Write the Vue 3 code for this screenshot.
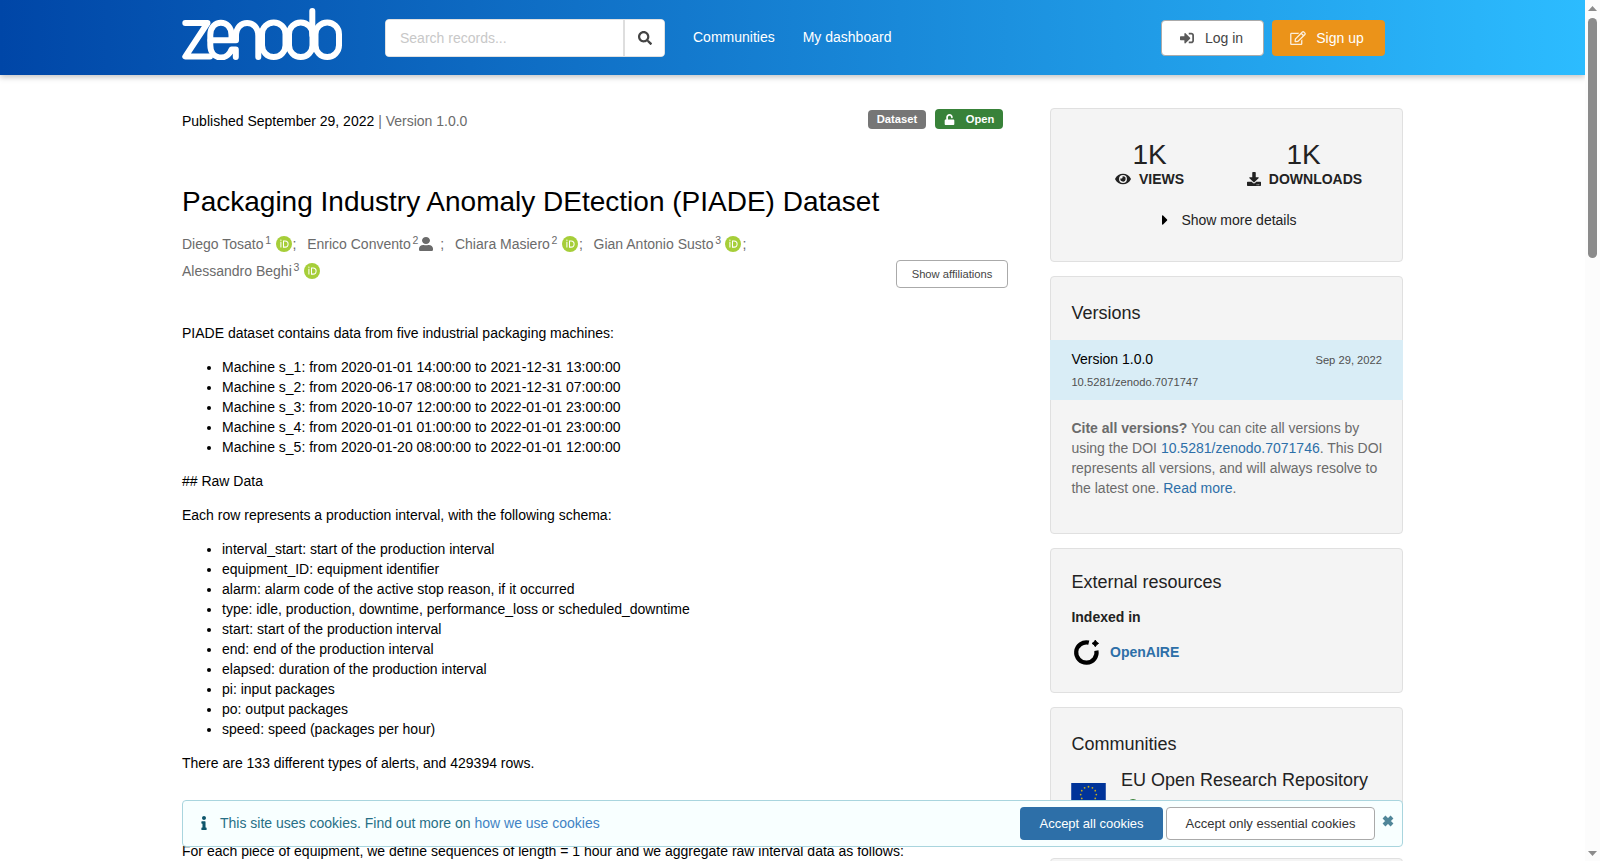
<script setup>
const icons = {
	search: {
		box: '0 0 512 512',
		path: 'M505 442.7L405.3 343c-4.5-4.5-10.6-7-17-7H372c27.6-35.3 44-79.7 44-128C416 93.1 322.9 0 208 0S0 93.1 0 208s93.1 208 208 208c48.3 0 92.7-16.4 128-44v16.3c0 6.4 2.5 12.5 7 17l99.7 99.7c9.4 9.4 24.6 9.4 33.9 0l28.3-28.3c9.4-9.4 9.4-24.6.1-34zM208 336c-70.7 0-128-57.2-128-128 0-70.7 57.2-128 128-128 70.7 0 128 57.2 128 128 0 70.7-57.2 128-128 128z',
	},
	signIn: {
		box: '0 0 512 512',
		path: 'M416 448h-84c-6.6 0-12-5.4-12-12v-40c0-6.6 5.4-12 12-12h84c17.7 0 32-14.3 32-32V160c0-17.7-14.3-32-32-32h-84c-6.6 0-12-5.4-12-12V76c0-6.6 5.4-12 12-12h84c53 0 96 43 96 96v192c0 53-43 96-96 96zm-47-201L201 79c-15-15-41-4.5-41 17v96H24c-13.3 0-24 10.7-24 24v96c0 13.3 10.7 24 24 24h136v96c0 21.5 26 32 41 17l168-168c9.3-9.4 9.3-24.6 0-34z',
	},
	edit: {
		box: '0 0 576 512',
		path: 'M402.3 344.9l32-32c5-5 13.7-1.5 13.7 5.7V464c0 26.5-21.5 48-48 48H48c-26.5 0-48-21.5-48-48V112c0-26.5 21.5-48 48-48h273.5c7.1 0 10.7 8.6 5.7 13.7l-32 32c-1.5 1.5-3.5 2.3-5.7 2.3H48v352h352V350.5c0-2.1.8-4.1 2.3-5.6zm156.6-201.8L296.3 405.7l-90.4 10c-26.2 2.9-48.5-19.2-45.6-45.6l10-90.4L432.9 17.1c22.9-22.9 59.9-22.9 82.7 0l43.2 43.2c22.9 22.9 22.9 60 .1 82.8zM460.1 174L402 115.9 216.2 301.8l-7.3 65.3 65.3-7.3L460.1 174zm64.8-79.7l-43.2-43.2c-4.1-4.1-10.8-4.1-14.8 0L436 82l58.1 58.1 30.9-30.9c4-4.2 4-10.8-.1-14.9z',
	},
	unlock: {
		box: '0 0 448 512',
		path: 'M400 256H152V152.9c0-39.6 31.7-72.5 71.3-72.9 40-.4 72.7 32.1 72.7 72v16c0 13.3 10.7 24 24 24h32c13.3 0 24-10.7 24-24v-16C376 68 307.5-.3 223.5 0 139.5.3 72 69.5 72 153.5V256H48c-26.5 0-48 21.5-48 48v160c0 26.5 21.5 48 48 48h352c26.5 0 48-21.5 48-48V304c0-26.5-21.5-48-48-48z',
	},
	user: {
		box: '0 0 448 512',
		path: 'M224 256c70.7 0 128-57.3 128-128S294.7 0 224 0 96 57.3 96 128s57.3 128 128 128zm89.6 32h-16.7c-22.2 10.2-46.9 16-72.9 16s-50.6-5.8-72.9-16h-16.7C60.2 288 0 348.2 0 422.4V464c0 26.5 21.5 48 48 48h352c26.5 0 48-21.5 48-48v-41.6c0-74.2-60.2-134.4-134.4-134.4z',
	},
	eye: {
		box: '0 0 576 512',
		path: 'M572.52 241.4C518.29 135.59 410.93 64 288 64S57.68 135.64 3.48 241.41a32.35 32.35 0 0 0 0 29.19C57.71 376.41 165.07 448 288 448s230.32-71.64 284.52-177.41a32.35 32.35 0 0 0 0-29.19zM288 400a144 144 0 1 1 144-144 143.93 143.93 0 0 1-144 144zm0-240a95.31 95.31 0 0 0-25.31 3.79 47.85 47.85 0 0 1-66.9 66.9A95.78 95.78 0 1 0 288 160z',
	},
	download: {
		box: '0 0 512 512',
		path: 'M216 0h80c13.3 0 24 10.7 24 24v168h87.7c17.8 0 26.7 21.5 14.1 34.1L269.7 378.3c-7.5 7.5-19.8 7.5-27.3 0L90.1 226.1c-12.6-12.6-3.7-34.1 14.1-34.1H192V24c0-13.3 10.7-24 24-24zm296 376v112c0 13.3-10.7 24-24 24H24c-13.3 0-24-10.7-24-24V376c0-13.3 10.7-24 24-24h146.7l49 49c20.1 20.1 52.5 20.1 72.6 0l49-49H488c13.3 0 24 10.7 24 24zm-124 88c0-11-9-20-20-20s-20 9-20 20 9 20 20 20 20-9 20-20zm64 0c0-11-9-20-20-20s-20 9-20 20 9 20 20 20 20-9 20-20z',
	},
	info: {
		box: '0 0 192 512',
		path: 'M20 424.229h20V279.771H20c-11.046 0-20-8.954-20-20V212c0-11.046 8.954-20 20-20h112c11.046 0 20 8.954 20 20v212.229h20c11.046 0 20 8.954 20 20V492c0 11.046-8.954 20-20 20H20c-11.046 0-20-8.954-20-20v-47.771c0-11.046 8.954-20 20-20zM96 0C56.235 0 24 32.235 24 72s32.235 72 72 72 72-32.235 72-72S135.764 0 96 0z',
	},
	caret: {
		box: '0 0 192 512',
		path: 'M0 384.662V127.338c0-17.818 21.543-26.741 34.142-14.142l128.662 128.662c7.81 7.81 7.81 20.474 0 28.284L34.142 398.804C21.543 411.404 0 402.48 0 384.662z',
	},
}

const creators = [
	{ name: 'Diego Tosato', affiliation: 1, orcid: true },
	{ name: 'Enrico Convento', affiliation: 2, orcid: false },
	{ name: 'Chiara Masiero', affiliation: 2, orcid: true },
	{ name: 'Gian Antonio Susto', affiliation: 3, orcid: true },
	{ name: 'Alessandro Beghi', affiliation: 3, orcid: true },
]

const machines = [
	'Machine s_1: from 2020-01-01 14:00:00 to 2021-12-31 13:00:00',
	'Machine s_2: from 2020-06-17 08:00:00 to 2021-12-31 07:00:00',
	'Machine s_3: from 2020-10-07 12:00:00 to 2022-01-01 23:00:00',
	'Machine s_4: from 2020-01-01 01:00:00 to 2022-01-01 23:00:00',
	'Machine s_5: from 2020-01-20 08:00:00 to 2022-01-01 12:00:00',
]

const fields = [
	'interval_start: start of the production interval',
	'equipment_ID: equipment identifier',
	'alarm: alarm code of the active stop reason, if it occurred',
	'type: idle, production, downtime, performance_loss or scheduled_downtime',
	'start: start of the production interval',
	'end: end of the production interval',
	'elapsed: duration of the production interval',
	'pi: input packages',
	'po: output packages',
	'speed: speed (packages per hour)',
]

// twelve stars of the flag, one every 30 degrees
const stars = Array.from({ length: 12 }, (_, i) => {
	const angle = (i * Math.PI) / 6
	return { x: 17.5 + 7.9 * Math.sin(angle), y: 11.7 - 7.9 * Math.cos(angle) }
})
</script>

<template>
	<div class="viewport">
		<div class="page">
			<header class="topbar">
				<div class="container topbar-row">
					<svg class="logo" viewBox="0 0 160 52" aria-label="Zenodo">
						<g fill="none" stroke="#fff" stroke-width="6" stroke-linecap="round" stroke-linejoin="round">
							<path d="M3.3 15H25.5L3.3 48.6H28" />
							<path d="M54 32.3H28.5M54 32.3V28C54 10.5 76.3 10.5 76.3 28V49" />
							<path d="M49.5 32V27C49.5 10.5 28.3 10.5 28.3 27V37C28.3 52 45 53.5 49.5 41.5H53.8V49" />
							<rect x="80" y="14.5" width="23.5" height="34.5" rx="11.7" />
							<rect x="107" y="14.5" width="23.5" height="34.5" rx="11.7" />
							<path d="M130.3 3V27" />
							<rect x="133.5" y="14.5" width="23.5" height="34.5" rx="11.7" />
						</g>
					</svg>
					<form class="search" @submit.prevent>
						<input type="text" placeholder="Search records..." aria-label="Search records">
						<button type="submit" aria-label="Search">
							<svg class="icon" :viewBox="icons.search.box"><path :d="icons.search.path" /></svg>
						</button>
					</form>
					<nav class="nav">
						<a>Communities</a>
						<a>My dashboard</a>
					</nav>
					<div class="auth">
						<button class="login">
							<svg class="icon" :viewBox="icons.signIn.box"><path :d="icons.signIn.path" /></svg>
							Log in
						</button>
						<button class="signup">
							<svg class="icon wide" :viewBox="icons.edit.box"><path :d="icons.edit.path" /></svg>
							Sign up
						</button>
					</div>
				</div>
			</header>

			<main class="container content">
				<article class="record">
					<div class="record-meta">
						<div>Published September 29, 2022 <span class="muted">| Version 1.0.0</span></div>
						<div class="labels">
							<span class="label">Dataset</span>
							<span class="label open">
								<svg :viewBox="icons.unlock.box"><path :d="icons.unlock.path" /></svg>
								Open
							</span>
						</div>
					</div>

					<h1>Packaging Industry Anomaly DEtection (PIADE) Dataset</h1>

					<div class="creators-row">
						<ul class="creators">
							<li v-for="(creator, i) in creators" :key="creator.name">
								<span>{{ creator.name }}</span>
								<sup>{{ creator.affiliation }}</sup>
								<svg v-if="creator.orcid" class="orcid" viewBox="0 0 16 16">
									<circle cx="8" cy="8" r="8" fill="#a6ce39" />
									<circle cx="4.9" cy="4.2" r=".65" fill="#fff" />
									<path d="M4.9 5.7V11.6M7.5 4.9H9.1C13.1 4.9 13.1 11.1 9.1 11.1H7.5Z" fill="none" stroke="#fff" stroke-width="1.05" />
								</svg>
								<svg v-else class="person" :viewBox="icons.user.box" preserveAspectRatio="none"><path :d="icons.user.path" /></svg>
								<span v-if="i < creators.length - 1">;</span>
							</li>
						</ul>
						<button class="affiliations">Show affiliations</button>
					</div>

					<div class="description">
						<p>PIADE dataset contains data from five industrial packaging machines:</p>
						<ul>
							<li v-for="machine in machines" :key="machine">{{ machine }}</li>
						</ul>
						<p>## Raw Data</p>
						<p>Each row represents a production interval, with the following schema:</p>
						<ul>
							<li v-for="field in fields" :key="field">{{ field }}</li>
						</ul>
						<p>There are 133 different types of alerts, and 429394 rows.</p>
						<p class="sequences">For each piece of equipment, we define sequences of length = 1 hour and we aggregate raw interval data as follows:</p>
					</div>
				</article>

				<aside class="sidebar">
					<section class="card stats">
						<div class="stat-grid">
							<div class="stat">
								<div class="stat-value">1K</div>
								<div class="stat-name">
									<svg class="icon wide" :viewBox="icons.eye.box"><path :d="icons.eye.path" /></svg>VIEWS
								</div>
							</div>
							<div class="stat">
								<div class="stat-value">1K</div>
								<div class="stat-name downloads">
									<svg class="icon" :viewBox="icons.download.box"><path :d="icons.download.path" /></svg>DOWNLOADS
								</div>
							</div>
						</div>
						<div class="more">
							<svg :viewBox="icons.caret.box"><path :d="icons.caret.path" /></svg>
							Show more details
						</div>
					</section>

					<section class="card versions">
						<h2>Versions</h2>
						<div class="version">
							<div class="version-row">
								<span>Version 1.0.0</span>
								<small>Sep 29, 2022</small>
							</div>
							<small>10.5281/zenodo.7071747</small>
						</div>
						<p class="cite">
							<strong>Cite all versions?</strong> You can cite all versions by using the DOI <a>10.5281/zenodo.7071746</a>. This DOI represents all versions, and will always resolve to the latest one. <a>Read more</a>.
						</p>
					</section>

					<section class="card external">
						<h2>External resources</h2>
						<h3>Indexed in</h3>
						<div class="resource">
							<svg viewBox="0 0 28 28">
								<path d="M15.8 4.6A10.2 10.2 0 1 0 23.4 12.6" fill="none" stroke="#000" stroke-width="4.2" />
								<path d="M22.3 2.1 23.6 4.1 25.6 5.4 23.6 6.7 22.3 8.7 21 6.7 19 5.4 21 4.1Z" stroke="#000" stroke-width=".9" />
							</svg>
							<a>OpenAIRE</a>
						</div>
					</section>

					<section class="card communities">
						<h2>Communities</h2>
						<div class="community">
							<svg class="flag" viewBox="0 0 35 23.3">
								<rect width="35" height="23.3" fill="#039" />
								<circle v-for="(star, i) in stars" :key="i" :cx="star.x" :cy="star.y" r=".9" fill="#c5ac1e" />
							</svg>
							<div>
								<div class="community-name">EU Open Research Repository</div>
								<svg class="verified" viewBox="0 0 14 14"><circle cx="7" cy="7" r="7" /></svg>
							</div>
						</div>
					</section>

					<section class="card"></section>
				</aside>
			</main>

			<div class="cookie-banner">
				<svg class="info" :viewBox="icons.info.box"><path :d="icons.info.path" /></svg>
				<p>This site uses cookies. Find out more on <a>how we use cookies</a></p>
				<button class="accept">Accept all cookies</button>
				<button class="essential">Accept only essential cookies</button>
				<svg class="close" viewBox="0 0 12 12"><path d="M2 2 10 10M10 2 2 10" /></svg>
			</div>
		</div>

		<div class="scrollbar">
			<svg viewBox="0 0 9 5"><path d="M0 5 4.5 0 9 5Z" /></svg>
			<div class="thumb"></div>
			<svg viewBox="0 0 9 5"><path d="M0 0H9L4.5 5Z" /></svg>
		</div>
	</div>
</template>

<style>
body {
	margin: 0;
	overflow: hidden;
}
</style>

<style scoped>
* {
	box-sizing: border-box;
}

.viewport {
	display: flex;
	height: 861px;
	overflow: hidden;
	background: #fff;
	color: #000;
	font: 14px/20px "Liberation Sans", Arial, sans-serif;
}

.page {
	position: relative;
	width: 1585px;
	overflow: hidden;
}

.container {
	width: 1221px;
	margin: 0 auto;
}

button {
	display: flex;
	align-items: center;
	justify-content: center;
	margin: 0;
	padding: 0;
	border: 0;
	border-radius: 4px;
	font: inherit;
	white-space: nowrap;
}

ul {
	margin: 0;
	padding: 0;
}

.icon {
	width: 14px;
	height: 14px;
	fill: currentColor;
}

.icon.wide {
	width: 16px;
}

.topbar {
	height: 75px;
	background: linear-gradient(90deg, #0046a7, #2cbcff);
	box-shadow: 0 2px 6px rgba(0, 0, 0, 0.25);
}

.topbar-row {
	display: flex;
	height: 75px;
}

.logo {
	width: 160px;
	height: 52px;
	margin: 8px 43px 0 0;
}

.search {
	display: flex;
	width: 280px;
	height: 38px;
	margin-top: 19px;
	overflow: hidden;
	border: 1px solid #e0e1e2;
	border-radius: 4px;
	background: #fff;
}

.search input {
	flex: 1;
	min-width: 0;
	padding: 0 14px;
	border: 0;
	font: inherit;
}

.search input::placeholder {
	color: #c8c8c8;
}

.search button {
	width: 41px;
	border-left: 2px solid #dedede;
	border-radius: 0;
	background: #fff;
	color: #444;
}

.nav {
	display: flex;
	gap: 28px;
	margin: 27px 0 0 28px;
	color: #fff;
}

.auth {
	display: flex;
	gap: 8px;
	margin: 20px 18px 0 auto;
}

.auth button {
	height: 36px;
}

.login {
	gap: 11px;
	width: 103px;
	padding-right: 2px;
	border: 1px solid #aaa;
	background: #fff;
	color: #444;
}

.login .icon {
	fill: #5a5a5a;
}

.signup {
	gap: 10px;
	width: 113px;
	padding-right: 3px;
	background: #eb9319;
	color: #fff;
}

.signup .icon {
	opacity: 0.85;
}

.content {
	display: flex;
	justify-content: space-between;
	padding-top: 33px;
}

.record {
	width: 826px;
}

.record-meta {
	display: flex;
	justify-content: space-between;
	padding: 3px 5px 0 0;
}

.muted {
	color: #6b6b6b;
}

.labels {
	display: flex;
	align-items: flex-end;
	gap: 9px;
	height: 20px;
	margin-top: -2px;
}

.label {
	display: flex;
	align-items: center;
	justify-content: center;
	width: 58px;
	height: 19px;
	padding-bottom: 1px;
	border-radius: 4px;
	background: #767676;
	color: #fff;
	font-size: 11.2px;
	font-weight: bold;
}

.label.open {
	gap: 11px;
	width: 68px;
	height: 20px;
	padding-bottom: 0;
	background: #388239;
}

.label svg {
	width: 11px;
	height: 11px;
	fill: currentColor;
}

h1 {
	margin: 53px 0 0;
	font-size: 28px;
	font-weight: normal;
	line-height: 36px;
}

.creators-row {
	display: flex;
	align-items: flex-end;
	justify-content: space-between;
	margin-top: 10px;
}

.creators {
	display: flex;
	flex-wrap: wrap;
	width: 640px;
	margin-bottom: 4px;
	color: #6b6b6b;
	list-style: none;
}

.creators li {
	display: flex;
	align-items: center;
	height: 27px;
	margin-right: 10.8px;
}

.creators sup {
	margin: -7px 0 0 1.7px;
	font-size: 10.5px;
	line-height: 14px;
}

.orcid {
	width: 16px;
	height: 16px;
	margin: 0 1px 0 4.5px;
}

.person {
	width: 14px;
	height: 14px;
	margin: 0 7px 0 1px;
	fill: currentColor;
}

.affiliations {
	width: 112px;
	height: 28px;
	border: 1px solid #aaa;
	background: #fff;
	color: #444;
	font-size: 11.2px;
}

.description {
	margin-top: 35px;
}

.description p,
.description ul {
	margin: 0 0 14px;
}

.description ul {
	padding-left: 40px;
}

.description .sequences {
	margin-top: 68px;
}

.sidebar {
	display: flex;
	flex-direction: column;
	gap: 14px;
	width: 353px;
}

.card {
	height: 137px;
	border: 1px solid #e0e0e0;
	border-radius: 4px;
	background: #f4f4f4;
	color: #222;
}

.card h2 {
	margin: 0;
	padding: 0 20px 0 20.4px;
	font-size: 18px;
	font-weight: normal;
	line-height: 24px;
}

.card a {
	color: #2d6fa8;
}

.stats {
	height: 154px;
	padding-top: 30px;
}

.stat-grid {
	display: grid;
	grid-template-columns: 154px 154px;
	justify-content: center;
	text-align: center;
}

.stat-value {
	font-size: 28px;
	line-height: 32px;
}

.stat-name {
	display: flex;
	align-items: center;
	justify-content: center;
	gap: 8px;
	margin-top: -2px;
	font-weight: bold;
}

.stat-name.downloads {
	padding-left: 2px;
}

.more {
	display: flex;
	align-items: center;
	justify-content: center;
	gap: 13px;
	margin-top: 21px;
	padding-left: 6px;
}

.more svg {
	width: 6px;
	height: 16px;
}

.versions {
	height: 258px;
	padding-top: 24px;
}

.version {
	height: 60px;
	margin: 15px -1px 0;
	padding: 9px 21px 0 21.4px;
	background: #d9edf6;
	color: #000;
}

.version-row {
	display: flex;
	align-items: baseline;
	justify-content: space-between;
}

.version small {
	color: #505050;
	font-size: 11.2px;
}

.version > small {
	display: block;
	margin-top: 2px;
}

.cite {
	margin: 18px 18px 0 20.4px;
	color: #6b6b6b;
}

.external {
	height: 145px;
	padding-top: 21px;
}

.external h3 {
	margin: 13px 20px 0 20.4px;
	font-size: 14px;
	line-height: 20px;
}

.resource {
	display: flex;
	align-items: center;
	gap: 9px;
	margin: 11px 0 0 22px;
	font-weight: bold;
}

.resource svg {
	width: 28px;
	height: 28px;
}

.communities {
	padding-top: 24px;
}

.community {
	display: flex;
	gap: 15px;
	margin: 11px 0 0 20px;
}

.flag {
	width: 35px;
	height: 23px;
	margin-top: 16px;
}

.community-name {
	font-size: 18px;
	line-height: 26px;
}

.verified {
	display: block;
	width: 12px;
	height: 12px;
	margin: 6px 0 0 6px;
	fill: #388239;
}

.cookie-banner {
	position: absolute;
	top: 800px;
	left: 182px;
	display: flex;
	align-items: center;
	width: 1221px;
	height: 47px;
	padding-left: 18px;
	border: 1px solid #a9d5de;
	border-radius: 4px;
	background: #f8ffff;
	color: #276f86;
}

.cookie-banner p {
	margin: -1px auto 0 13px;
}

.cookie-banner p a {
	color: #4183c4;
}

.info {
	width: 6px;
	height: 14px;
	margin-top: -1px;
	fill: #0e566c;
}

.cookie-banner button {
	height: 33px;
	font-size: 13px;
}

.accept {
	width: 143px;
	margin-right: 3px;
	background: #2d6fa8;
	color: #fff;
}

.essential {
	width: 209px;
	border: 1px solid #aaa;
	background: #fff;
	color: #333;
}

.close {
	width: 12px;
	height: 12px;
	margin: 0 8px 6px 7px;
	fill: none;
	stroke: #508699;
	stroke-width: 4;
}

.scrollbar {
	display: flex;
	flex-direction: column;
	align-items: center;
	width: 15px;
	padding: 6px 0 5px;
	background: #fcfcfc;
}

.scrollbar svg {
	width: 9px;
	height: 5px;
	fill: #8b8b8b;
}

.thumb {
	width: 9px;
	height: 240px;
	margin: 7px 0 auto;
	border-radius: 5px;
	background: #8b8b8b;
}
</style>
